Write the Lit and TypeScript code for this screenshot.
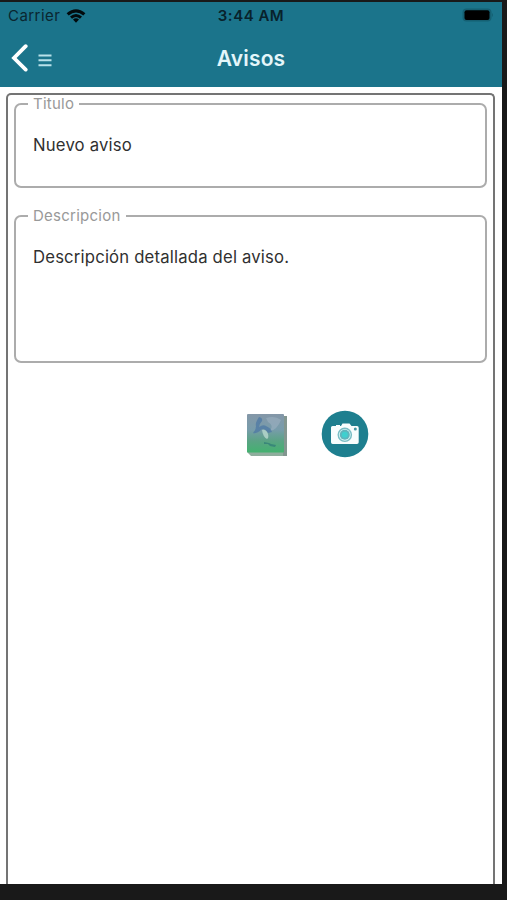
import { LitElement, html, css, svg } from "lit";
import { customElement, property } from "lit/decorators.js";

@customElement("outlined-field")
class OutlinedField extends LitElement {
  @property() label = "";
  @property() value = "";

  static styles = css`
    :host { display: block; box-sizing: border-box; }
    .field {
      box-sizing: border-box; height: 100%; margin: 0; min-width: 0;
      border: 2px solid #acacac; border-radius: 7px; padding: 0 17px 0 12px;
    }
    .label {
      padding: 0 5px; height: 18px; line-height: 18px;
      font-size: 15px; letter-spacing: 0.25px; color: #999;
    }
    .value {
      padding: 21px 0 0 5px; font-size: 16.7px; line-height: 22px;
      letter-spacing: 0.18px; color: #303030; white-space: nowrap;
    }
  `;

  render() {
    return html`<fieldset class="field">
      <legend class="label">${this.label}</legend>
      <div class="value">${this.value}</div>
    </fieldset>`;
  }
}

const wifi = svg`
  <path d="M.6 5.3Q10 -3 19.4 5.3L17.3 7.5Q10 1.4 2.7 7.5Z"/>
  <path d="M4 8.6Q10 3.4 16 8.6L14 10.7Q10 7.1 6 10.7Z"/>
  <path d="M7 11.6Q10 8.9 13 11.6L10 14.7Z"/>`;

@customElement("app-root")
class AppRoot extends LitElement {
  static styles = css`
    :host {
      display: flex; flex-direction: column; box-sizing: border-box;
      width: 507px; height: 900px; padding: 2px 5px 16px 0;
      background: #191919; font-family: Inter, "Liberation Sans", sans-serif;
    }
    svg { display: block; }
    .top { height: 85px; flex: none; background: #1b748b; }
    .status, .nav { display: grid; grid-template-columns: 1fr auto 1fr; align-items: center; }
    .status { height: 27px; color: #0a2630; font-size: 15px; line-height: 20px; }
    .carrier { display: flex; align-items: center; gap: 6px; padding-left: 8px; letter-spacing: 0.45px; }
    .time { font-weight: 600; color: #08222b; letter-spacing: 0.5px; }
    .battery { justify-self: end; margin: -2px 8px 0 0; }
    .nav { height: 58px; }
    .tools { display: flex; align-items: center; gap: 10px; padding-left: 11px; }
    .menu { margin-top: 4px; }
    .title { margin: 2px 0 0; font-size: 21px; line-height: 28px; font-weight: 600; letter-spacing: 0.2px; color: #e4f6fa; }
    .body { flex: 1; min-height: 0; background: #fff; padding: 6px 7px 0 6px; display: flex; }
    .panel {
      flex: 1; box-sizing: border-box; border: 2px solid #747474; border-bottom: 0;
      border-radius: 5px 5px 0 0; padding: 0 6px;
    }
    .short { height: 93px; }
    .long { height: 156px; margin-top: 19px; }
    .actions { display: flex; align-items: center; gap: 33px; padding: 47px 0 0 232px; }
  `;

  render() {
    return html`
      <header class="top">
        <div class="status">
          <div class="carrier"><span>Carrier</span>
            <svg width="20" height="15" viewBox="0 0 20 15" fill="#020a0d">${wifi}</svg>
          </div>
          <span class="time">3:44 AM</span>
          <svg class="battery" width="32" height="14" viewBox="0 0 32 14">
            <rect x="0.5" y="0.5" width="29" height="13" rx="4" fill="#156073"/>
            <rect x="2.5" y="2.3" width="25" height="9.6" rx="2" fill="#000"/>
            <path d="M30 5q2 2 0 4z" fill="#156073"/>
          </svg>
        </div>
        <div class="nav">
          <div class="tools">
            <svg width="17" height="28" viewBox="0 0 17 28" fill="none" stroke="#fff" stroke-width="3.8" stroke-linecap="round" stroke-linejoin="miter"><path d="M14.7 2.2 3 14 14.7 25.6"/></svg>
            <svg class="menu" width="14" height="13" viewBox="0 0 14 13" stroke="#b9e1ea" stroke-width="2"><path d="M.5 1.5h13M.5 6.3h13M.5 11.3h13"/></svg>
          </div>
          <h1 class="title">Avisos</h1>
          <span></span>
        </div>
      </header>
      <main class="body">
        <section class="panel">
          <outlined-field class="short" label="Titulo" value="Nuevo aviso"></outlined-field>
          <outlined-field class="long" label="Descripcion" value="Descripción detallada del aviso."></outlined-field>
          <div class="actions">
            <svg width="42" height="44" viewBox="0 0 42 44">
              <defs>
                <linearGradient id="cover" x1="0" y1="0" x2="0" y2="1">
                  <stop offset="0" stop-color="#8497a8"/><stop offset=".4" stop-color="#789cab"/>
                  <stop offset=".7" stop-color="#5aa384"/><stop offset="1" stop-color="#43b26f"/>
                </linearGradient>
              </defs>
              <path d="M4 4h37v40H5L1 40z" fill="#8fae9d"/>
              <path d="M37 4h4v40h-4z" fill="#82968f"/>
              <rect x="1" y="2" width="37" height="38.5" rx="1" fill="url(#cover)"/>
              <path d="M20 6Q29 3 35 8Q31 18 24 19Q28 13 22 10Z" fill="#9db1c2" opacity=".6"/>
              <path d="M13 5Q17 6 16 9Q14 11 13 15Q17 12 20 14Q25 16 26 20L22 21Q18 15 15 18Q10 22 7 21Q10 18 10 14Q9 11 13 5Z" fill="#4d78a4" opacity=".75"/>
              <path d="M16 18Q20 17 22 22Q23 26 21 27Q17 25 16 18Z" fill="#b5d6cb" opacity=".85"/>
              <path d="M18 30L23 31L25 32L30 33L29 35L24 34L22 32L18 32Z" fill="#337f78" opacity=".8"/>
            </svg>
            <svg width="48" height="48" viewBox="0 0 48 48">
              <circle cx="24" cy="24" r="23.3" fill="#1e7f8f"/>
              <path d="M11.5 16H15v-1h4v1h1l1.500-2.500h7L30.500 16H36q1.700 0 1.700 1.700v14.500q0 1.700-1.700 1.700H11.700Q10 33.900 10 32.200V17.500Q10 16 11.500 16z" fill="#f8fdfd"/>
              <circle cx="34.300" cy="19" r="1.500" fill="#4597a3"/>
              <circle cx="23.800" cy="24.800" r="7.300" fill="#78bdc4"/>
              <circle cx="23.800" cy="24.800" r="5.900" fill="#d9f4f5"/>
              <circle cx="23.800" cy="24.800" r="5" fill="#5fb5bd"/>
              <circle cx="23.800" cy="24.800" r="3" fill="#3fd0cf"/>
            </svg>
          </div>
        </section>
      </main>`;
  }
}
